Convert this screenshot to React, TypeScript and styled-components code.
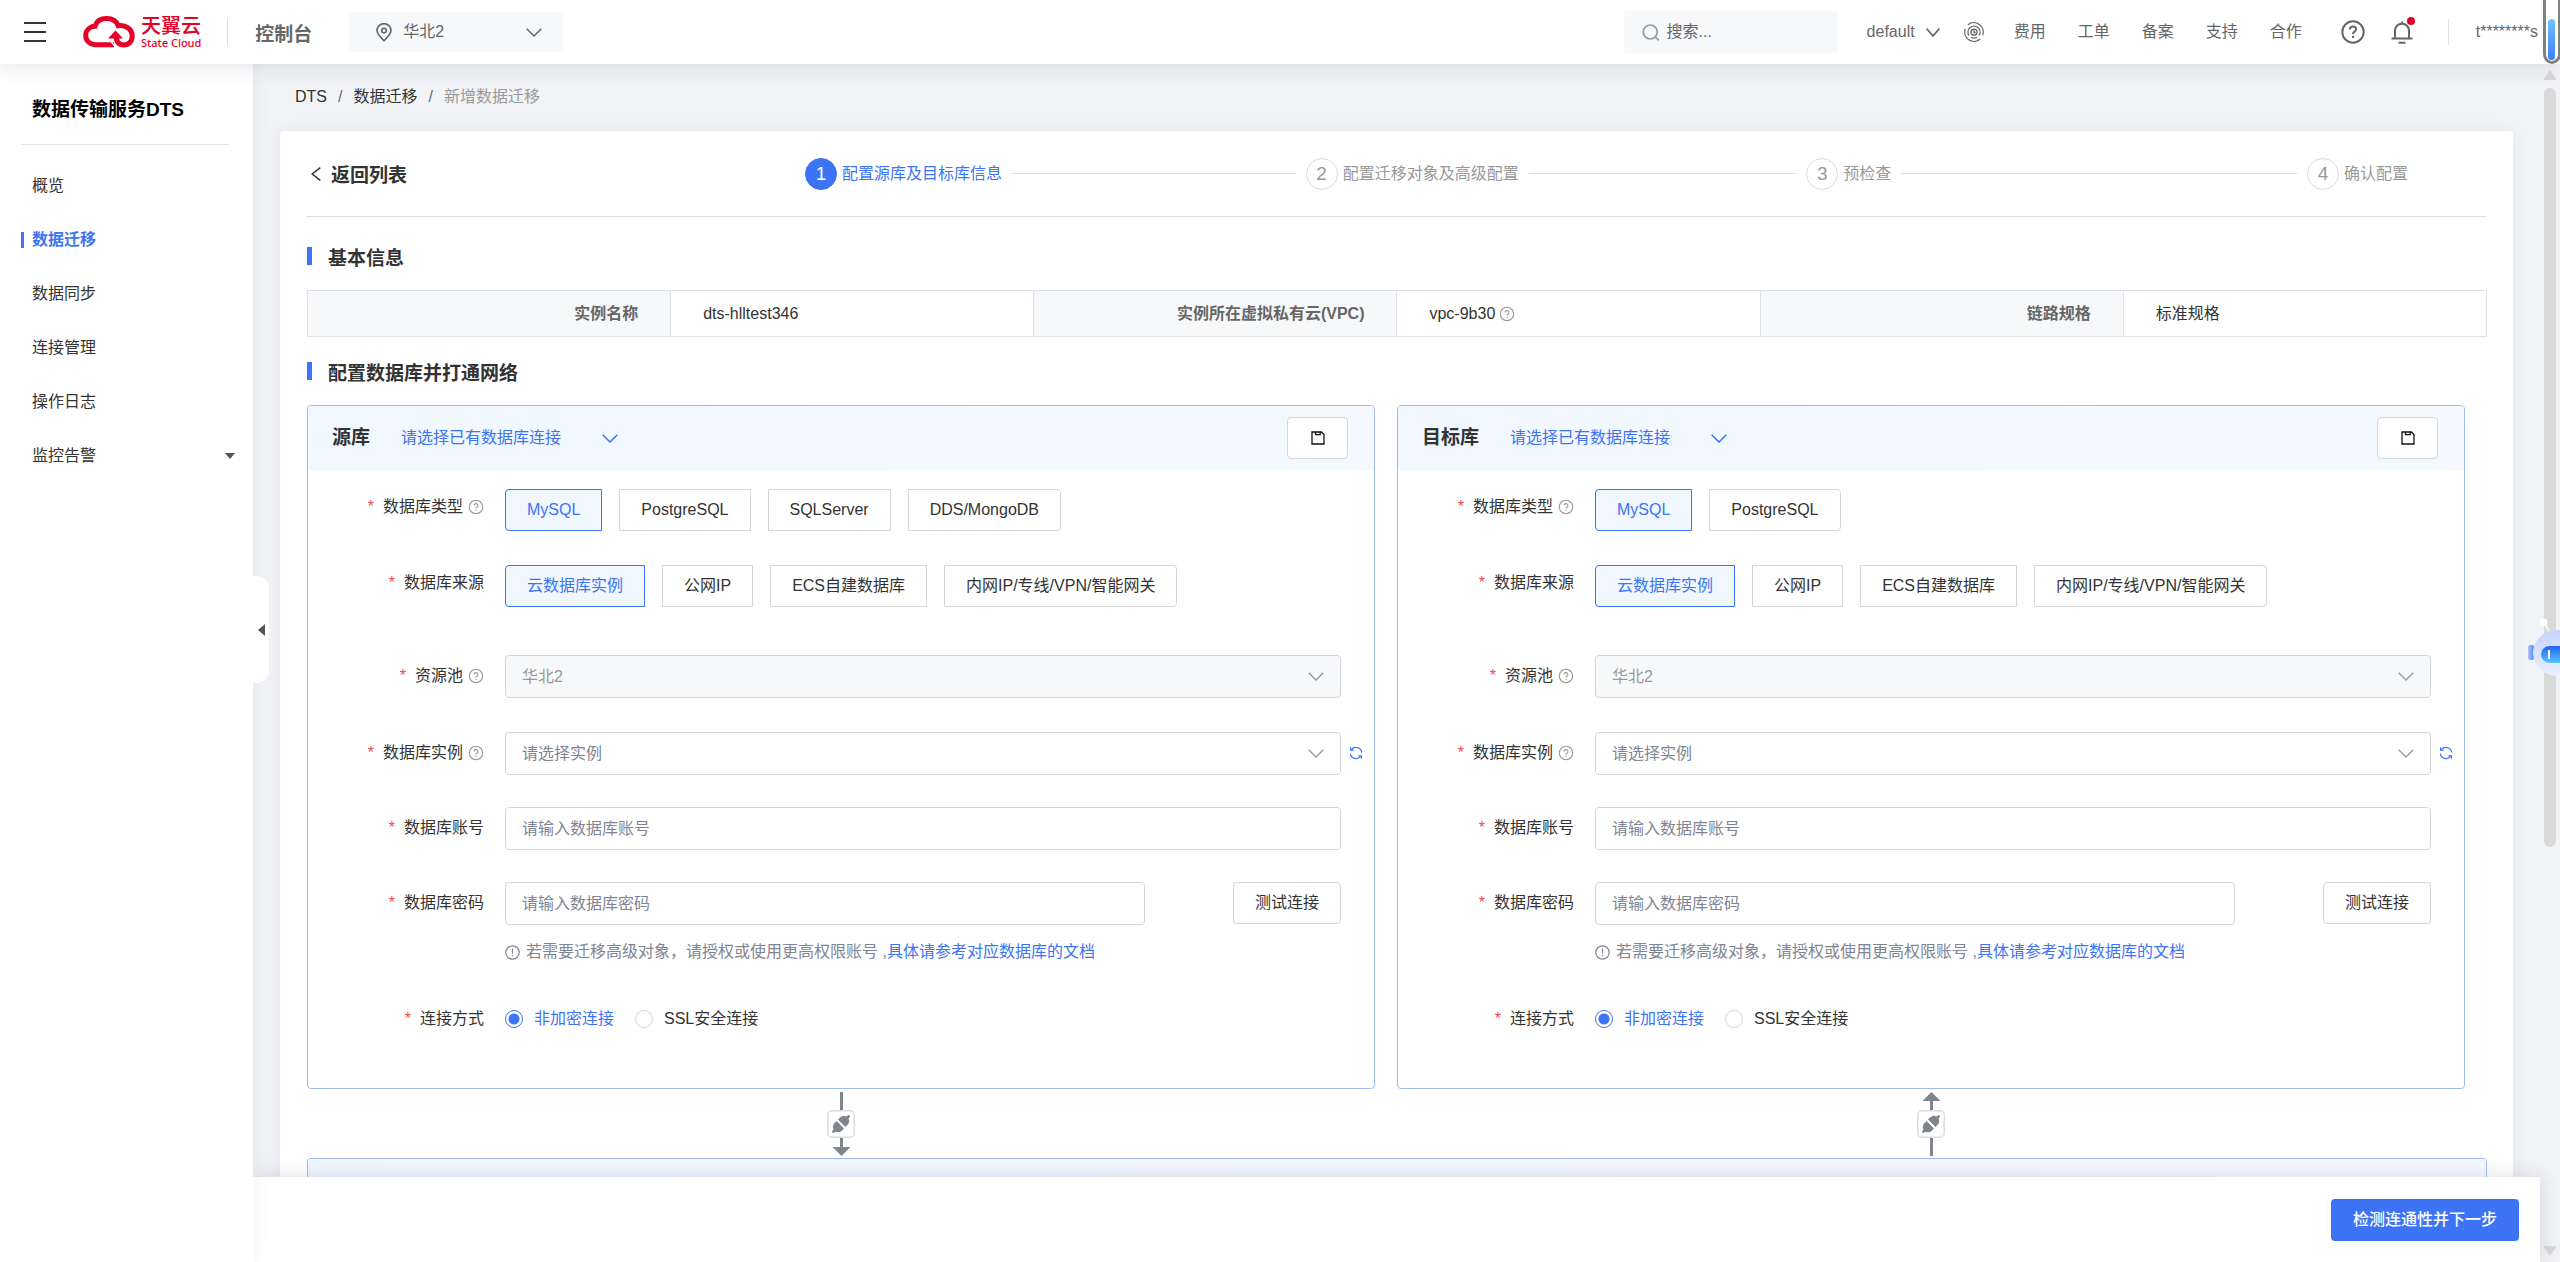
import React from "react";
import styled, { createGlobalStyle, css } from "styled-components";

const c = {
  blue: "#3d73f5",
  red: "#e60027",
  text: "#333333",
  sub: "#666666",
  mute: "#999999",
  hint: "#808594",
  line: "#dcdcde",
  field: "#d5d7db",
  soft: "#f7f8fa",
  page: "#f2f3f6",
  panel: "#9fb9fa",
};

const Global = createGlobalStyle`
  * { box-sizing: border-box; }
  html, body { margin: 0; padding: 0; overflow: hidden; }
  body, button, input, select {
    font-family: "Liberation Sans", "Noto Sans CJK SC", sans-serif;
    font-size: 16px;
    line-height: 20px;
    color: ${c.text};
  }
  button { cursor: pointer; }
  a { color: inherit; text-decoration: none; }
  h1, h2, h3, ul, ol { margin: 0; padding: 0; font-weight: 700; list-style: none; }
  svg { display: block; flex: none; }
`;

/* ---------- shell ---------- */
const Shell = styled.div`
  display: flex;
  flex-direction: column;
  height: 100vh;
  background: ${c.page};
`;
const TopBar = styled.header`
  position: relative;
  z-index: 3;
  flex: none;
  display: flex;
  align-items: center;
  height: 64px;
  padding: 0 22px 0 24px;
  background: #fff;
  box-shadow: 0 4px 20px rgba(20, 30, 70, 0.1);
`;
const IconButton = styled.button`
  position: relative;
  display: flex;
  padding: 0;
  border: 0;
  background: none;
  color: ${c.sub};
`;
const Logo = styled.a`
  display: flex;
  align-items: center;
  gap: 6px;
  margin-left: 37px;
  color: ${c.red};
`;
const LogoText = styled.span`
  display: flex;
  flex-direction: column;
  font-size: 20px;
  line-height: 21px;
  font-weight: 500;
`;
const LogoSub = styled.small`
  font: 500 11px/11px "Noto Sans", sans-serif;
`;
const Rule = styled.span`
  width: 1px;
  height: 26px;
  background: #dddddf;
  margin: 0 27px 0 26px;
`;
const Console = styled.a`
  font-size: 19px;
  line-height: normal;
  font-weight: 700;
  color: ${c.sub};
`;
const Region = styled.label`
  position: relative;
  display: flex;
  align-items: center;
  width: 213px;
  height: 40px;
  margin-left: 38px;
  padding: 0 21px 0 26px;
  gap: 11px;
  border-radius: 4px;
  background: ${c.soft};
  color: ${c.sub};
`;
const BareSelect = styled.select`
  appearance: none;
  flex: 1;
  min-width: 0;
  padding: 0;
  border: 0;
  outline: 0;
  background: none;
  color: inherit;
`;
const TopRight = styled.div`
  display: flex;
  align-items: center;
  margin-left: auto;
  color: ${c.sub};
`;
const Search = styled.label`
  display: flex;
  align-items: center;
  gap: 7px;
  width: 214px;
  height: 42px;
  padding: 0 18px;
  border-radius: 4px;
  background: ${c.soft};
`;
const SearchInput = styled.input`
  flex: 1;
  min-width: 0;
  padding: 0;
  border: 0;
  outline: 0;
  background: none;
  &::placeholder { color: ${c.sub}; opacity: 1; }
`;
const Workspace = styled.button`
  display: flex;
  align-items: center;
  gap: 11px;
  margin: 0 24px 0 29px;
  padding: 0;
  border: 0;
  background: none;
  color: ${c.sub};
`;
const TopNav = styled.nav`
  display: flex;
  gap: 32px;
  margin: 0 39px 0 30px;
`;
const Tools = styled.div`
  display: flex;
  align-items: center;
  gap: 26px;
  margin-right: 9px;
`;
const Dot = styled.i`
  position: absolute;
  top: -4px;
  right: -2px;
  width: 8px;
  height: 8px;
  border-radius: 50%;
  background: ${c.red};
`;
const Tube = styled.div`
  position: absolute;
  top: 0;
  right: 0;
`;

const Body = styled.div`
  flex: 1;
  min-height: 0;
  display: flex;
`;
const Side = styled.aside`
  position: relative;
  z-index: 2;
  flex: none;
  width: 253px;
  padding: 0 24px 0 21px;
  background: #fff;
  box-shadow: 0 0 20px rgba(20, 30, 70, 0.06);
`;
const SideTitle = styled.h1`
  padding: 34px 11px 22px;
  border-bottom: 1px solid #dfe1ea;
  font-size: 19px;
  line-height: 24px;
  color: #000;
  white-space: nowrap;
`;
const Menu = styled.ul`
  margin-top: 14px;
`;
const MenuLink = styled.a<{ $on?: boolean }>`
  display: flex;
  align-items: center;
  gap: 8px;
  height: 54px;
  margin-right: -6px;
  color: ${(p) => (p.$on ? c.blue : c.text)};
  font-weight: ${(p) => (p.$on ? 700 : 400)};
  &::before {
    content: "";
    width: 3px;
    height: 16px;
    background: ${(p) => (p.$on ? c.blue : "transparent")};
  }
  svg { margin-left: auto; }
`;
const Fold = styled.button`
  position: absolute;
  top: 512px;
  left: 100%;
  display: flex;
  align-items: center;
  width: 16px;
  height: 107px;
  padding: 0 0 0 5px;
  border: 0;
  border-radius: 0 12px 12px 0;
  background: #fff;
`;
const Main = styled.main`
  flex: 1;
  min-width: 0;
  display: flex;
  flex-direction: column;
`;
const Scroller = styled.div`
  flex: 1;
  min-height: 0;
  overflow: hidden;
`;
const Crumbs = styled.nav`
  display: flex;
  gap: 11px;
  padding: 21px 42px 22px;
  line-height: 24px;
`;
const Crumb = styled.a<{ $last?: boolean }>`
  color: ${(p) => (p.$last ? c.mute : c.text)};
`;
const Slash = styled.span`
  color: ${c.sub};
`;
const Card = styled.section`
  margin: 0 27px;
  padding: 0 26px 40px 27px;
  border-radius: 4px;
  background: #fff;
  box-shadow: 0 0 20px rgba(20, 30, 70, 0.06);
`;
const Footer = styled.footer`
  position: relative;
  z-index: 1;
  flex: none;
  display: flex;
  justify-content: flex-end;
  align-items: flex-start;
  height: 85px;
  padding: 22px 21px;
  background: #fff;
  box-shadow: 0 0 20px rgba(20, 30, 70, 0.14);
`;
const Primary = styled.button`
  height: 42px;
  padding: 0 22px;
  border: 0;
  border-radius: 4px;
  background: ${c.blue};
  color: #fff;
  font-weight: 500;
`;
const Rail = styled.div`
  flex: none;
  display: flex;
  flex-direction: column;
  align-items: center;
  justify-content: space-between;
  width: 20px;
  padding: 6px 0;
`;
const Track = styled.div`
  flex: 1;
  margin: 8px 0;
`;
const Thumb = styled.div`
  width: 12px;
  height: 66%;
  border-radius: 6px;
  background: #d9d9d9;
`;
const Robot = styled.button`
  position: absolute;
  z-index: 4;
  right: 0;
  top: 616px;
  padding: 0;
  border: 0;
  background: none;
`;

/* ---------- wizard head ---------- */
const CardHead = styled.div`
  display: grid;
  grid-template-columns: 498px 1fr;
  align-items: center;
  height: 86px;
  border-bottom: 1px solid ${c.line};
`;
const Back = styled.a`
  display: flex;
  align-items: center;
  gap: 10px;
  padding-left: 4px;
  font-size: 19px;
  line-height: normal;
  font-weight: 700;
`;
const Steps = styled.ol`
  display: grid;
  grid-template-columns: 1fr 1fr 1fr 180px;
`;
const Step = styled.li<{ $on?: boolean }>`
  display: flex;
  align-items: center;
  font-weight: 400;
  color: ${(p) => (p.$on ? c.blue : c.mute)};
  &:not(:last-child)::after {
    content: "";
    flex: 1;
    height: 1px;
    margin: 0 10px;
    background: ${c.line};
  }
`;
const StepNo = styled.span<{ $on?: boolean }>`
  display: flex;
  align-items: center;
  justify-content: center;
  width: 32px;
  height: 32px;
  margin-right: 5px;
  border: 1px solid ${(p) => (p.$on ? c.blue : c.line)};
  border-radius: 50%;
  background: ${(p) => (p.$on ? c.blue : "#fff")};
  color: ${(p) => (p.$on ? "#fff" : c.mute)};
  font-size: 19px;
`;

/* ---------- sections ---------- */
const Title = styled.h2`
  display: flex;
  align-items: center;
  gap: 16px;
  height: 18px;
  margin: 25px 0;
  font-size: 19px;
  line-height: normal;
  ${CardHead} + & { margin-top: 30px; }
  &::before {
    content: "";
    width: 5px;
    height: 18px;
    background: ${c.blue};
  }
`;
const Info = styled.table`
  width: 100%;
  table-layout: fixed;
  border-collapse: collapse;
  th, td {
    height: 46px;
    padding: 0 32px;
    border: 1px solid #dfe1ea;
  }
  th {
    background: ${c.soft};
    color: ${c.sub};
    font-weight: 700;
    text-align: right;
  }
`;
const Inline = styled.span`
  display: flex;
  align-items: center;
  gap: 4px;
`;
const Pair = styled.div`
  display: grid;
  grid-template-columns: 1fr 1fr;
  column-gap: 22px;
  padding-right: 22px;
`;
const Panel = styled.section`
  border: 1px solid ${c.panel};
  border-radius: 4px;
  overflow: hidden;
`;
const PanelHead = styled.div`
  display: flex;
  align-items: center;
  height: 64px;
  padding: 0 26px 0 24px;
  background: linear-gradient(90deg, #f0f7ff, #f5f9ff);
`;
const PanelTitle = styled.h3`
  font-size: 19px;
`;
const LinkPick = styled.label`
  position: relative;
  display: flex;
  align-items: center;
  width: 217px;
  margin-left: 31px;
  color: ${c.blue};
`;
const buttonBox = css`
  height: 42px;
  border: 1px solid ${c.field};
  border-radius: 4px;
  background: #fff;
`;
const SaveButton = styled.button`
  ${buttonBox}
  display: flex;
  align-items: center;
  justify-content: center;
  width: 61px;
  margin-left: auto;
  padding: 0;
`;
const TestButton = styled.button`
  ${buttonBox}
  padding: 0 21px;
`;
const PanelBody = styled.div`
  padding: 19px 0 57px;
`;
const Row = styled.div<{ $space?: number }>`
  display: grid;
  grid-template-columns: 197px 1fr 33px;
  margin-bottom: ${(p) => p.$space ?? 32}px;
`;
const Caption = styled.div<{ $h: number }>`
  display: flex;
  align-items: center;
  justify-content: flex-end;
  gap: 5px;
  height: ${(p) => p.$h}px;
  padding-right: 21px;
  white-space: nowrap;
`;
const Star = styled.span`
  margin-right: 4px;
  color: #f5484a;
`;
const Choices = styled.div`
  display: flex;
  gap: 17px;
`;
const Choice = styled.button<{ $on?: boolean }>`
  height: 42px;
  padding: 0 21px;
  border: 1px solid ${(p) => (p.$on ? c.blue : c.field)};
  border-radius: 0;
  background: ${(p) => (p.$on ? "#f0f7ff" : "#fff")};
  color: ${(p) => (p.$on ? c.blue : c.text)};
  white-space: nowrap;
  &:first-child { border-radius: 4px 0 0 4px; }
  &:last-child { border-radius: 0 4px 4px 0; }
`;
const fieldBox = css`
  width: 100%;
  height: 43px;
  padding: 0 16px;
  border: 1px solid ${c.field};
  border-radius: 4px;
  outline: 0;
  background: #fff;
`;
const Field = styled.input`
  ${fieldBox}
  &::placeholder { color: ${c.hint}; opacity: 1; }
`;
const Drop = styled.div`
  position: relative;
`;
const DropSelect = styled.select`
  ${fieldBox}
  appearance: none;
  color: ${c.hint};
  &:disabled { background: ${c.soft}; color: ${c.mute}; opacity: 1; }
`;
const DropArrow = styled.span`
  position: absolute;
  right: 17px;
  top: 17px;
  color: ${c.mute};
  pointer-events: none;
`;
const Refresh = styled.button`
  display: flex;
  align-items: center;
  height: 42px;
  padding: 0 0 0 8px;
  border: 0;
  background: none;
  color: ${c.blue};
`;
const PassLine = styled.div`
  display: flex;
  justify-content: space-between;
  ${Field} { width: calc(100% - 196px); }
`;
const Hint = styled.p`
  display: flex;
  align-items: center;
  margin: 16px 0 0;
  line-height: 22px;
  color: ${c.hint};
  white-space: pre;
  svg { margin-right: 6px; }
`;
const DocLink = styled.a`
  color: ${c.blue};
`;
const Radios = styled.div`
  display: flex;
  align-items: center;
  gap: 21px;
  height: 24px;
`;
const RadioLabel = styled.label<{ $on?: boolean }>`
  display: flex;
  align-items: center;
  gap: 11px;
  color: ${(p) => (p.$on ? c.blue : c.text)};
`;
const Radio = styled.input`
  appearance: none;
  width: 18px;
  height: 18px;
  margin: 0;
  border: 1px solid ${c.field};
  border-radius: 50%;
  background: #fff;
  &:checked {
    border-color: ${c.blue};
    background: radial-gradient(circle, ${c.blue} 5px, #fff 6px);
  }
`;
const Links = styled(Pair)`
  justify-items: center;
  padding-top: 3px;
  padding-bottom: 2px;
`;

/* ---------- drawings ---------- */
const Chevron = ({ w = 16, sw = 1.5 }: { w?: number; sw?: number }) => (
  <svg width={w} height="9" viewBox="0 0 16 9" fill="none" stroke="currentColor" strokeWidth={sw} preserveAspectRatio="none">
    <path d="M.7.7 8 8 15.3.7" />
  </svg>
);
const Ask = () => (
  <svg width="16" height="16" viewBox="0 0 16 16" fill="none" stroke="#999" strokeWidth="1.1">
    <circle cx="8" cy="8" r="6.700" />
    <path d="M6.100 6.600a1.900 1.900 0 1 1 2.800 1.600c-.7.4-.9.7-.9 1.300" />
    <path d="M8 10.700v1.200" />
  </svg>
);
const Burger = () => (
  <svg width="22" height="20" viewBox="0 0 22 20" fill={c.text}>
    <path d="M0 0h22v2H0zM0 9h22v2H0zM0 18h22v2H0z" />
  </svg>
);
const Cloud = () => (
  <svg width="52" height="32" viewBox="0 0 52 32" fill="none">
    <path
      d="M31 28.8H13C6.600 28.800 2.700 24.500 2.700 19.500c0-5 3.800-8.800 9.300-9.200C13.500 5.200 18 2.600 23.800 2.600c5.600 0 9.600 2.500 11.400 7.100 7.400-1.100 14 3.500 14 10.300 0 5.300-3.600 9-8.200 9-4.600 0-8-3-8.200-10"
      stroke={c.red}
      strokeWidth="5"
    />
    <path d="M32.500 14.500 40 22.500H25z" fill={c.red} />
    <path d="M28 25.500 33.500 32" stroke="#fff" strokeWidth="1.500" />
  </svg>
);
const Pin = () => (
  <svg width="16" height="19" viewBox="0 0 16 19" fill="none" stroke={c.sub} strokeWidth="1.600">
    <path d="M8 17.800C4 13.800 1 11 1 7.600a7 7 0 0 1 14 0c0 3.400-3 6.200-7 10.200z" />
    <circle cx="8" cy="7.500" r="2.300" />
  </svg>
);
const Magnifier = () => (
  <svg width="18" height="17" viewBox="0 0 18 17" fill="none" stroke={c.mute} strokeWidth="1.700">
    <circle cx="8.300" cy="8" r="7" />
    <path d="m13 13 3.800 3.300" />
  </svg>
);
const Swirl = () => (
  <svg width="20" height="20" viewBox="0 0 20 20" fill="none" stroke={c.sub} strokeWidth="1.300">
    <path d="M4 2.800a9.300 9.300 0 0 1 14.600 10.500M16.200 17A9.300 9.300 0 0 1 1.300 6.800" />
    <path d="M5 13.400a6 6 0 1 1 10 0M13 15.200a6 6 0 0 1-6 0" />
    <circle cx="10" cy="10.200" r="3" />
    <path d="M10 8.200v2.300h1.600" />
  </svg>
);
const Help = () => (
  <svg width="24" height="24" viewBox="0 0 24 24" fill="none" stroke={c.sub} strokeWidth="2">
    <circle cx="12" cy="12" r="10.700" />
    <path d="M8.900 9.600c0-1.900 1.300-3.100 3.100-3.100s3.100 1.200 3.100 2.800c0 2.300-3.100 2.300-3.100 4.700" />
    <path d="M12 15.700v2.200" />
  </svg>
);
const Bell = () => (
  <svg width="22" height="23" viewBox="0 0 22 23" fill="none" stroke={c.sub} strokeWidth="2">
    <path d="M4 17.500V9.800c0-4 3-7 7-7s7 3 7 7v7.700M.5 17.500h21M11 3V.5M7.500 21.700h7" />
  </svg>
);
const Floppy = () => (
  <svg width="14" height="14" viewBox="0 0 14 14" fill="none" stroke="#111" strokeWidth="1.300">
    <path d="M1 1h9.500L13 3.500V13H1z" />
    <path d="M4.500 1v2.700h4.700V1" />
  </svg>
);
const Reload = () => (
  <svg width="14" height="14" viewBox="0 0 14 14" fill="none" stroke="currentColor" strokeWidth="1.200">
    <path d="M2.400 3.600a5.800 5.800 0 0 1 10.300 2.800M11.600 10.400A5.800 5.800 0 0 1 1.300 7.600" />
    <path d="M1.600 1.200v3h3.200M12.400 12.800v-3H9.200" />
  </svg>
);
const Notice = () => (
  <svg width="15" height="15" viewBox="0 0 15 15" fill="none" stroke={c.hint} strokeWidth="1.200">
    <circle cx="7.500" cy="7.500" r="6.700" />
    <path d="M7.500 3.600v5M7.500 9.900v1.400" />
  </svg>
);
const Connector = ({ up }: { up?: boolean }) => (
  <svg width="28" height="64" viewBox="0 0 28 64">
    <path d={up ? "M14.500 6v58" : "M14.500 0v58"} stroke="#80848f" strokeWidth="3" />
    <path d={up ? "M14.500 0 23.500 9h-18z" : "M14.500 64 23.500 55h-18z"} fill="#80848f" />
    <rect x="0.750" y="18.750" width="26.500" height="26.500" rx="4" fill="#fff" stroke="#dcdcde" strokeWidth="1.500" />
    <g transform="translate(14 32) rotate(-45)" fill="#80848f">
      <path d="M1-5.200H4.200a5.200 5.200 0 0 1 0 10.400H1z" />
      <path d="M-1-5.200H-4.200a5.200 5.200 0 0 0 0 10.400H-1z" />
      <rect x="8" y="-1.300" width="4" height="2.600" rx="1" />
      <rect x="-12" y="-1.300" width="4" height="2.600" rx="1" />
    </g>
  </svg>
);

/* ---------- form panel ---------- */
type PanelProps = { id: string; title: string; types: string[] };
const sources = ["云数据库实例", "公网IP", "ECS自建数据库", "内网IP/专线/VPN/智能网关"];

function DbPanel({ id, title, types }: PanelProps) {
  return (
    <Panel>
      <PanelHead>
        <PanelTitle>{title}</PanelTitle>
        <LinkPick>
          <BareSelect aria-label={`${title}连接`}>
            <option>请选择已有数据库连接</option>
          </BareSelect>
          <Chevron />
        </LinkPick>
        <SaveButton type="button" aria-label="保存">
          <Floppy />
        </SaveButton>
      </PanelHead>
      <PanelBody>
        <Row $space={34}>
          <Caption $h={36}>
            <Star>*</Star>数据库类型<Ask />
          </Caption>
          <Choices>
            {types.map((t, i) => (
              <Choice type="button" key={t} $on={i === 0} aria-pressed={i === 0}>
                {t}
              </Choice>
            ))}
          </Choices>
        </Row>
        <Row $space={48}>
          <Caption $h={36}>
            <Star>*</Star>数据库来源
          </Caption>
          <Choices>
            {sources.map((t, i) => (
              <Choice type="button" key={t} $on={i === 0} aria-pressed={i === 0}>
                {t}
              </Choice>
            ))}
          </Choices>
        </Row>
        <Row $space={34}>
          <Caption as="label" htmlFor={`${id}-pool`} $h={42}>
            <Star>*</Star>资源池<Ask />
          </Caption>
          <Drop>
            <DropSelect id={`${id}-pool`} disabled>
              <option>华北2</option>
            </DropSelect>
            <DropArrow><Chevron sw={1.3} /></DropArrow>
          </Drop>
        </Row>
        <Row>
          <Caption as="label" htmlFor={`${id}-inst`} $h={42}>
            <Star>*</Star>数据库实例<Ask />
          </Caption>
          <Drop>
            <DropSelect id={`${id}-inst`}>
              <option>请选择实例</option>
            </DropSelect>
            <DropArrow><Chevron sw={1.3} /></DropArrow>
          </Drop>
          <Refresh type="button" aria-label="刷新">
            <Reload />
          </Refresh>
        </Row>
        <Row>
          <Caption as="label" htmlFor={`${id}-user`} $h={42}>
            <Star>*</Star>数据库账号
          </Caption>
          <Field id={`${id}-user`} placeholder="请输入数据库账号" />
        </Row>
        <Row $space={44}>
          <Caption as="label" htmlFor={`${id}-pass`} $h={42}>
            <Star>*</Star>数据库密码
          </Caption>
          <div>
            <PassLine>
              <Field id={`${id}-pass`} type="password" placeholder="请输入数据库密码" />
              <TestButton type="button">测试连接</TestButton>
            </PassLine>
            <Hint>
              <Notice />
              若需要迁移高级对象，请授权或使用更高权限账号 ,<DocLink href="#doc">具体请参考对应数据库的文档</DocLink>
            </Hint>
          </div>
        </Row>
        <Row $space={0}>
          <Caption $h={24}>
            <Star>*</Star>连接方式
          </Caption>
          <Radios>
            <RadioLabel $on>
              <Radio type="radio" name={`${id}-mode`} defaultChecked />
              非加密连接
            </RadioLabel>
            <RadioLabel>
              <Radio type="radio" name={`${id}-mode`} />
              SSL安全连接
            </RadioLabel>
          </Radios>
        </Row>
      </PanelBody>
    </Panel>
  );
}

const menu = ["概览", "数据迁移", "数据同步", "连接管理", "操作日志", "监控告警"];
const steps = ["配置源库及目标库信息", "配置迁移对象及高级配置", "预检查", "确认配置"];

export default function App() {
  return (
    <Shell>
      <Global />
      <TopBar>
        <IconButton type="button" aria-label="菜单">
          <Burger />
        </IconButton>
        <Logo href="#home">
          <Cloud />
          <LogoText>
            天翼云
            <LogoSub>State Cloud</LogoSub>
          </LogoText>
        </Logo>
        <Rule />
        <Console href="#console">控制台</Console>
        <Region>
          <Pin />
          <BareSelect aria-label="区域">
            <option>华北2</option>
          </BareSelect>
          <Chevron />
        </Region>
        <TopRight>
          <Search>
            <Magnifier />
            <SearchInput aria-label="搜索" placeholder="搜索..." />
          </Search>
          <Workspace type="button">
            default
            <Chevron w={14} sw={1.8} />
          </Workspace>
          <Swirl />
          <TopNav>
            {["费用", "工单", "备案", "支持", "合作"].map((t) => (
              <a key={t} href="#nav">{t}</a>
            ))}
          </TopNav>
          <Tools>
            <IconButton type="button" aria-label="帮助">
              <Help />
            </IconButton>
            <IconButton type="button" aria-label="消息">
              <Bell />
              <Dot />
            </IconButton>
          </Tools>
          <Rule />
          <span>t********s</span>
        </TopRight>
        <Tube>
          <svg width="17" height="64" viewBox="0 0 17 64">
            <defs>
              <linearGradient id="tube" x1="0" y1="0" x2="0" y2="1">
                <stop offset="0" stopColor="#6cc4ff" />
                <stop offset="1" stopColor="#3d7ff5" />
              </linearGradient>
            </defs>
            <path d="M1.500 0v54a7.500 8.500 0 0 0 15 0V0" fill="#fff" stroke="#808080" strokeWidth="3" />
            <rect x="5" y="19" width="7" height="41" rx="3.500" fill="url(#tube)" />
          </svg>
        </Tube>
      </TopBar>
      <Body>
        <Side>
          <SideTitle>数据传输服务DTS</SideTitle>
          <Menu>
            {menu.map((m, i) => (
              <li key={m}>
                <MenuLink href="#menu" $on={i === 1}>
                  {m}
                  {i === 5 && (
                    <svg width="10" height="6" viewBox="0 0 10 6" fill="#555">
                      <path d="M0 0h10L5 6z" />
                    </svg>
                  )}
                </MenuLink>
              </li>
            ))}
          </Menu>
          <Fold type="button" aria-label="收起">
            <svg width="7" height="12" viewBox="0 0 7 12" fill="#555">
              <path d="M7 0v12L0 6z" />
            </svg>
          </Fold>
        </Side>
        <Main>
          <Scroller>
            <Crumbs>
              <Crumb href="#dts">DTS</Crumb>
              <Slash>/</Slash>
              <Crumb href="#move">数据迁移</Crumb>
              <Slash>/</Slash>
              <Crumb as="span" $last>新增数据迁移</Crumb>
            </Crumbs>
            <Card>
              <CardHead>
                <Back href="#list">
                  <svg width="10" height="14" viewBox="0 0 10 14" fill="none" stroke={c.text} strokeWidth="1.500">
                    <path d="M9.300.700 1.200 7l8.100 6.300" />
                  </svg>
                  返回列表
                </Back>
                <Steps>
                  {steps.map((s, i) => (
                    <Step key={s} $on={i === 0}>
                      <StepNo $on={i === 0}>{i + 1}</StepNo>
                      {s}
                    </Step>
                  ))}
                </Steps>
              </CardHead>
              <Title>基本信息</Title>
              <Info>
                <tbody>
                  <tr>
                    <th scope="row">实例名称</th>
                    <td>dts-hlltest346</td>
                    <th scope="row">实例所在虚拟私有云(VPC)</th>
                    <td>
                      <Inline>vpc-9b30<Ask /></Inline>
                    </td>
                    <th scope="row">链路规格</th>
                    <td>标准规格</td>
                  </tr>
                </tbody>
              </Info>
              <Title>配置数据库并打通网络</Title>
              <Pair>
                <DbPanel id="src" title="源库" types={["MySQL", "PostgreSQL", "SQLServer", "DDS/MongoDB"]} />
                <DbPanel id="dst" title="目标库" types={["MySQL", "PostgreSQL"]} />
              </Pair>
              <Links>
                <Connector />
                <Connector up />
              </Links>
              <Panel>
                <PanelHead />
              </Panel>
            </Card>
          </Scroller>
          <Footer>
            <Primary type="button">检测连通性并下一步</Primary>
          </Footer>
        </Main>
        <Rail>
          <svg width="12" height="10" viewBox="0 0 12 10" fill="#d9d9d9">
            <path d="M6 0 12 8.500V10H0V8.500z" />
          </svg>
          <Track>
            <Thumb />
          </Track>
          <svg width="12" height="10" viewBox="0 0 12 10" fill="#d9d9d9">
            <path d="M6 10 12 1.500V0H0v1.500z" />
          </svg>
        </Rail>
      </Body>
      <Robot type="button" aria-label="智能助手">
        <svg width="34" height="62" viewBox="0 0 34 62">
          <defs>
            <linearGradient id="visor" x1="0" y1="0" x2="0" y2="1">
              <stop offset="0" stopColor="#1f62f0" />
              <stop offset="1" stopColor="#55c6ff" />
            </linearGradient>
            <linearGradient id="head" x1="0" y1="0" x2="0" y2="1">
              <stop offset="0" stopColor="#c5d2fb" />
              <stop offset="1" stopColor="#edf1ff" />
            </linearGradient>
            <linearGradient id="ear" x1="0" y1="0" x2="1" y2="0">
              <stop offset="0" stopColor="#b9c4fb" />
              <stop offset="1" stopColor="#3f8ef5" />
            </linearGradient>
          </defs>
          <path d="M18 6.500 23 15" stroke="#fff" strokeWidth="1.500" />
          <circle cx="17.700" cy="6.300" r="3.800" fill="#fff" />
          <rect x="2" y="29" width="6" height="15" rx="2" fill="url(#ear)" />
          <ellipse cx="32" cy="37" rx="25" ry="23" fill="url(#head)" />
          <rect x="15" y="30" width="36" height="17" rx="8.500" fill="url(#visor)" />
          <path d="M23 34v9" stroke="#fff" strokeWidth="2" />
        </svg>
      </Robot>
    </Shell>
  );
}
